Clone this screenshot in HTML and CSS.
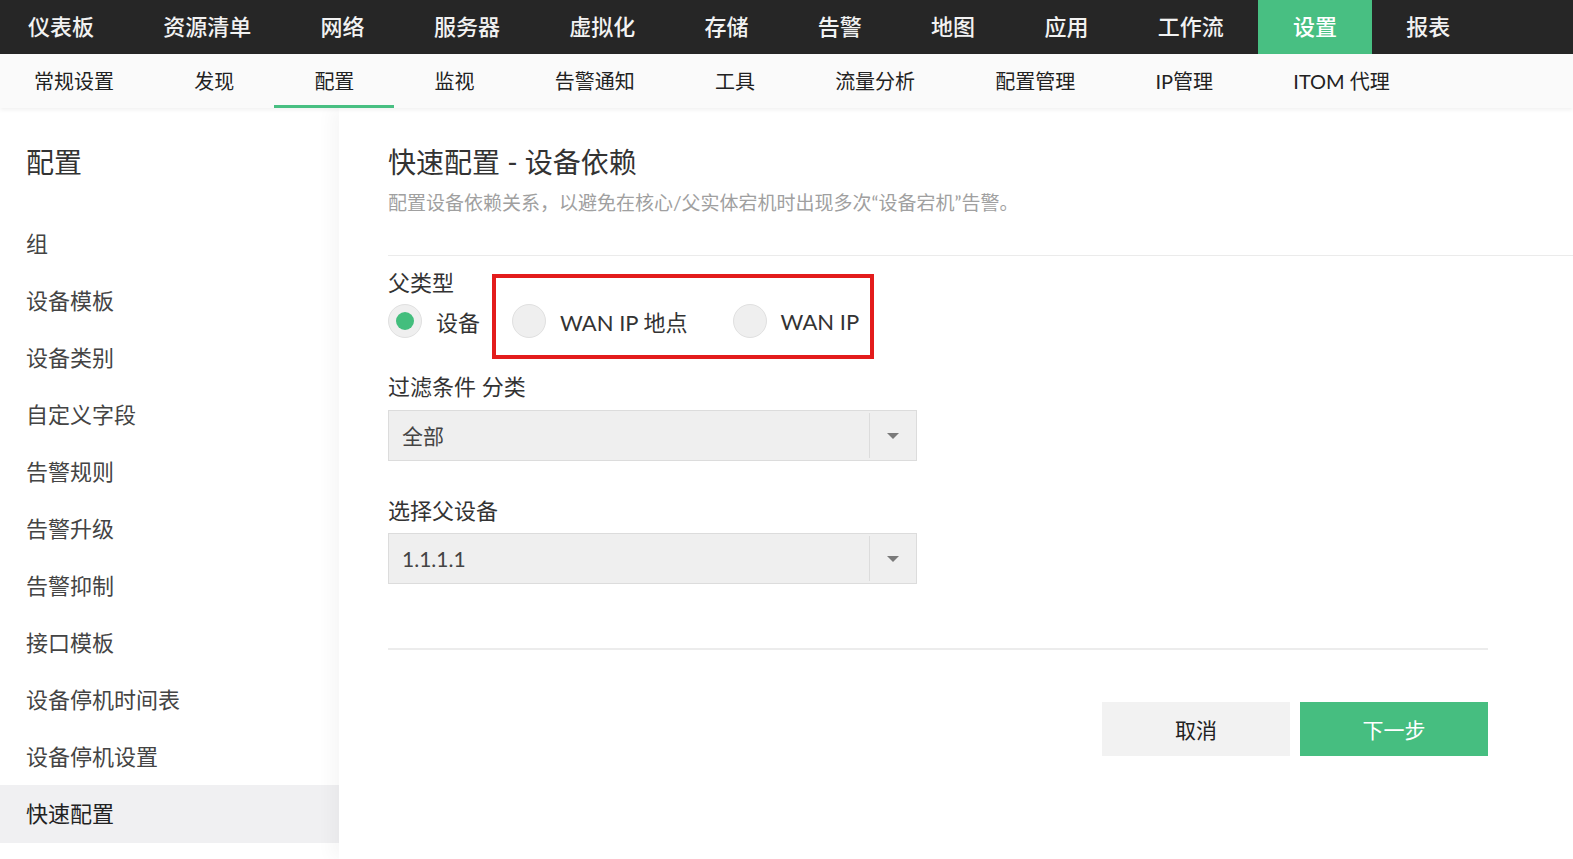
FILE: index.html
```html
<!DOCTYPE html>
<html lang="zh-CN">
<head>
  <meta charset="UTF-8">
  <title>快速配置 - 设备依赖</title>
  <link rel="stylesheet" href="styles.css">
</head>
<body>
  <nav class="topnav">
    <a class="topnav-item">仪表板</a>
    <a class="topnav-item">资源清单</a>
    <a class="topnav-item">网络</a>
    <a class="topnav-item">服务器</a>
    <a class="topnav-item">虚拟化</a>
    <a class="topnav-item">存储</a>
    <a class="topnav-item">告警</a>
    <a class="topnav-item">地图</a>
    <a class="topnav-item">应用</a>
    <a class="topnav-item">工作流</a>
    <a class="topnav-item active">设置</a>
    <a class="topnav-item">报表</a>
  </nav>

  <nav class="subnav">
    <a class="subnav-item">常规设置</a>
    <a class="subnav-item">发现</a>
    <a class="subnav-item active">配置</a>
    <a class="subnav-item">监视</a>
    <a class="subnav-item">告警通知</a>
    <a class="subnav-item">工具</a>
    <a class="subnav-item">流量分析</a>
    <a class="subnav-item">配置管理</a>
    <a class="subnav-item">IP管理</a>
    <a class="subnav-item">ITOM 代理</a>
  </nav>

  <div class="main">
    <aside class="sidebar">
      <h2 class="sidebar-title">配置</h2>
      <ul class="sidebar-list">
        <li>组</li>
        <li>设备模板</li>
        <li>设备类别</li>
        <li>自定义字段</li>
        <li>告警规则</li>
        <li>告警升级</li>
        <li>告警抑制</li>
        <li>接口模板</li>
        <li>设备停机时间表</li>
        <li>设备停机设置</li>
        <li class="active">快速配置</li>
      </ul>
    </aside>

    <section class="content">
      <h1 class="page-title">快速配置 - 设备依赖</h1>
      <p class="page-desc">配置设备依赖关系，以避免在核心/父实体宕机时出现多次“设备宕机”告警。</p>
      <div class="divider"></div>

      <div class="form">
        <div class="field-label first">父类型</div>
        <div class="radio-row">
          <label class="radio checked"><span class="radio-dot"></span>设备</label>
          <span class="highlight">
            <label class="radio"><span class="radio-dot"></span>WAN IP 地点</label>
            <label class="radio"><span class="radio-dot"></span>WAN IP</label>
          </span>
        </div>

        <div class="field-label">过滤条件 分类</div>
        <div class="select">
          <span class="select-value">全部</span>
          <span class="select-arrow"></span>
        </div>

        <div class="field-label second">选择父设备</div>
        <div class="select">
          <span class="select-value">1.1.1.1</span>
          <span class="select-arrow"></span>
        </div>

        <div class="form-divider"></div>

        <div class="actions">
          <button class="btn btn-cancel">取消</button>
          <button class="btn btn-next">下一步</button>
        </div>
      </div>
    </section>
  </div>
</body>
</html>
```

FILE: styles.css
```css
/* Settings > Configuration > Quick config */
body {
  font-family: 'Lato', 'Noto Sans CJK SC', sans-serif;
  background-color: #fff;
  color: #333;
  margin: 0;
  padding: 0;
}

.topnav {
  display: flex;
  height: 54px;
  background-color: #262626;
}

.topnav-item {
  padding: 0 34.65px;
  line-height: 54px;
  font-size: 22px;
  font-weight: 500;
  color: #f2f2f2;
}

.topnav-item:first-child {
  padding-left: 28px;
}

.topnav-item.active {
  background-color: #48bf82;
  color: #fff;
}

.subnav {
  display: flex;
  height: 54px;
  background-color: #fafafa;
  box-shadow: 0 2px 4px rgba(0, 0, 0, 0.06);
  position: relative;
  z-index: 2;
}

.subnav-item {
  padding: 0 40.1px;
  line-height: 54px;
  font-size: 20px;
  color: #222;
}

.subnav-item:first-child {
  padding-left: 34px;
}

.subnav-item.active {
  box-shadow: inset 0 -3px 0 #48bf82;
}

.main {
  display: flex;
  min-height: 751px;
}

.sidebar {
  width: 339px;
  flex-shrink: 0;
  padding-top: 36px;
}

.sidebar-title {
  margin: 0;
  padding-left: 26px;
  font-size: 28px;
  font-weight: 400;
  line-height: 36px;
  color: #333;
}

.sidebar-list {
  list-style: none;
  margin: 34.5px 0 0;
  padding: 0;
}

.sidebar-list li {
  height: 57.1px;
  line-height: 57px;
  padding-left: 26px;
  font-size: 22px;
  color: #444;
}

.sidebar-list li.active {
  background-color: #f0f0f2;
  color: #222;
}

.content {
  flex: 1;
  padding: 36px 0 0 49px;
  box-shadow: -8px 0 16px rgba(0, 0, 0, 0.035);
  position: relative;
  z-index: 1;
}

.page-title {
  margin: 0;
  font-size: 28px;
  font-weight: 400;
  line-height: 36px;
  color: #333;
}

.page-desc {
  margin: 11px 0 0;
  font-size: 19px;
  line-height: 24px;
  color: #a0a0a0;
}

.divider {
  height: 1px;
  background-color: #ebebeb;
  margin-top: 40px;
}

.form {
  width: 1100px;
}

.field-label {
  margin-top: 32px;
  font-size: 22px;
  line-height: 26px;
  color: #333;
}

.field-label.first {
  margin-top: 14px;
}

.field-label.second {
  margin-top: 37px;
}

.radio-row {
  display: flex;
  align-items: center;
  height: 42px;
  margin-top: 4px;
}

.radio {
  display: inline-flex;
  align-items: center;
  font-size: 22px;
  color: #333;
}

.radio-dot {
  width: 32px;
  height: 32px;
  border-radius: 50%;
  background-color: #efefef;
  border: 1px solid #e0e0e0;
  margin-right: 14px;
  display: flex;
  align-items: center;
  justify-content: center;
}

.radio.checked .radio-dot::after {
  content: '';
  width: 18px;
  height: 18px;
  border-radius: 50%;
  background-color: #43be7d;
}

.highlight {
  display: inline-flex;
  align-items: center;
  gap: 45px;
  margin: -26px 0 -17px 16px;
  padding: 26px 11px 17px 16px;
  outline: 4px solid #e31c1c;
}

.select {
  display: flex;
  align-items: stretch;
  width: 527px;
  height: 49px;
  margin-top: 10px;
  background-color: #efefef;
  border: 1px solid #dcdcdc;
}

.field-label.second + .select {
  margin-top: 9px;
}

.select-value {
  flex: 1;
  padding-left: 13px;
  line-height: 49px;
  font-size: 21px;
  color: #444;
}

.select-arrow {
  width: 46px;
  border-left: 1px solid #dcdcdc;
  margin: 2px 0;
  position: relative;
}

.select-arrow::after {
  content: '';
  position: absolute;
  left: 17px;
  top: 20px;
  border-left: 6px solid transparent;
  border-right: 6px solid transparent;
  border-top: 6px solid #7a7a7a;
}

.form-divider {
  height: 2px;
  background-color: #ececec;
  margin-top: 64px;
}

.actions {
  display: flex;
  justify-content: flex-end;
  gap: 10px;
  margin-top: 52px;
}

.btn {
  width: 188px;
  height: 54px;
  border: none;
  font-family: 'Lato', 'Noto Sans CJK SC', sans-serif;
  font-size: 21px;
  cursor: pointer;
}

.btn-cancel {
  background-color: #f2f2f2;
  color: #222;
}

.btn-next {
  background-color: #46be80;
  color: #fff;
}
```
